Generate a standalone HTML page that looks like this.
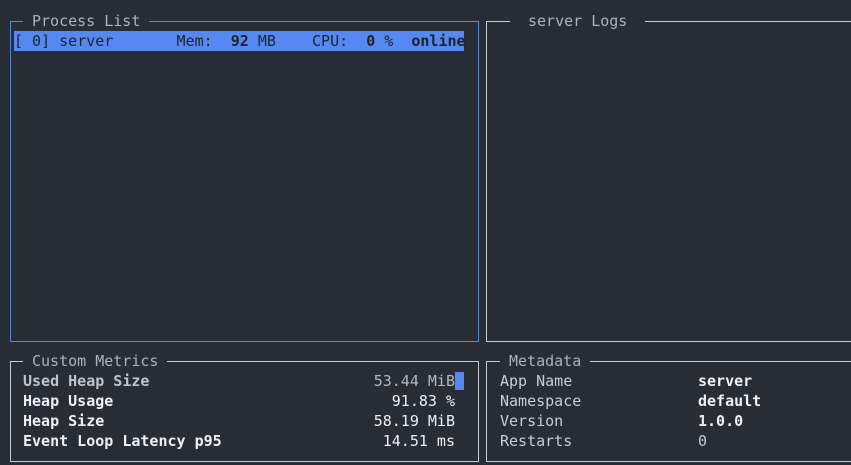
<!DOCTYPE html>
<html><head><meta charset="utf-8"><style>
html,body{margin:0;padding:0;background:#282c34;width:851px;height:465px;overflow:hidden}
body{position:relative;font-family:"DejaVu Sans Mono","Liberation Mono",monospace;font-size:15px;color:#c8ccd4}
.box{position:absolute;box-sizing:border-box;border:1px solid #c8ccd4}
.t{position:absolute;top:-11px;height:20px;line-height:21px;background:#282c34;padding:0 9px;color:#abb2bf;white-space:pre}
.r{position:absolute;height:20px;line-height:21px;white-space:pre}
b{font-weight:bold}
</style></head><body>
<div class="box" style="left:10px;top:21px;width:469px;height:321px;border-color:#5a84d6">
  <div class="t" style="left:12px">Process List</div>
</div>
<div class="r" style="left:14px;top:31px;width:450px;background:#5588f0;color:#1e222a">[ 0] server       Mem:  <b>92</b> MB    CPU:  <b>0</b> %  <b>online</b></div>

<div class="box" style="left:486px;top:21px;width:380px;height:321px">
  <div class="t" style="left:23px;padding:0 18px">server Logs</div>
</div>

<div class="box" style="left:10px;top:361px;width:469px;height:101px">
  <div class="t" style="left:12px">Custom Metrics</div>
</div>
<div class="r" style="left:23px;top:371px;color:#c0c4cc"><b>Used Heap Size</b></div>
<div class="r" style="left:23px;top:391px;color:#eef0f4"><b>Heap Usage</b></div>
<div class="r" style="left:23px;top:411px;color:#eef0f4"><b>Heap Size</b></div>
<div class="r" style="left:23px;top:431px;color:#eef0f4"><b>Event Loop Latency p95</b></div>
<div class="r" style="right:396px;top:371px;color:#b4b8c0">53.44 MiB</div>
<div class="r" style="right:396px;top:391px;color:#eef0f4">91.83 %</div>
<div class="r" style="right:396px;top:411px;color:#eef0f4">58.19 MiB</div>
<div class="r" style="right:396px;top:431px;color:#eef0f4">14.51 ms</div>
<div style="position:absolute;left:455px;top:372px;width:9px;height:18px;background:#5588f0"></div>

<div class="box" style="left:486px;top:361px;width:380px;height:101px">
  <div class="t" style="left:13px">Metadata</div>
</div>
<div class="r" style="left:500px;top:371px">App Name</div>
<div class="r" style="left:500px;top:391px">Namespace</div>
<div class="r" style="left:500px;top:411px">Version</div>
<div class="r" style="left:500px;top:431px">Restarts</div>
<div class="r" style="left:698px;top:371px;color:#eef0f4"><b>server</b></div>
<div class="r" style="left:698px;top:391px;color:#eef0f4"><b>default</b></div>
<div class="r" style="left:698px;top:411px;color:#eef0f4"><b>1.0.0</b></div>
<div class="r" style="left:698px;top:431px">0</div>
</body></html>
